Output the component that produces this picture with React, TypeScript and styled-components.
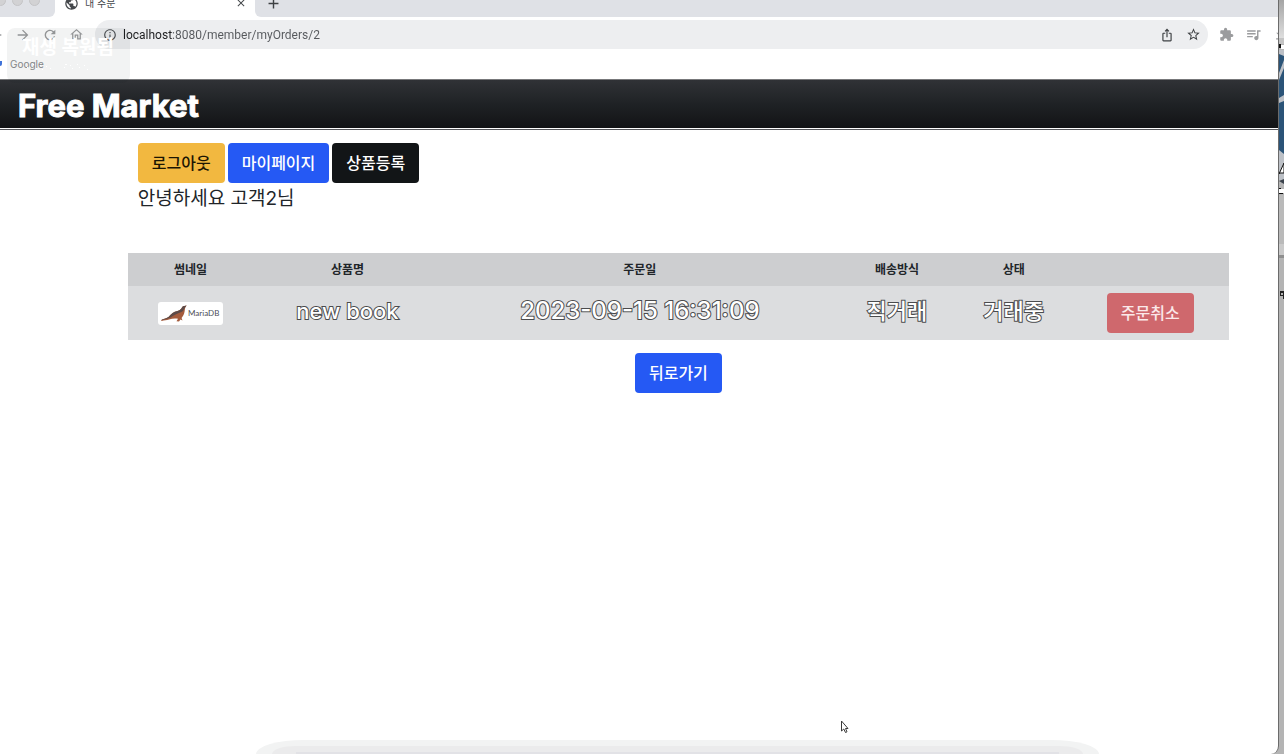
import React from "react";
import styled, { createGlobalStyle } from "styled-components";
import {
  MdAdd,
  MdArrowBack,
  MdArrowForward,
  MdClose,
  MdExtension,
  MdFileDownload,
  MdInfoOutline,
  MdIosShare,
  MdOutlineHome,
  MdPublic,
  MdQueueMusic,
  MdRefresh,
  MdStarBorder,
} from "react-icons/md";

const GlobalStyle = createGlobalStyle`
  * { box-sizing: border-box; }
  body {
    margin: 0;
    overflow: hidden;
    background: #fff;
    font-family: Inter, "Noto Sans CJK KR", sans-serif;
    color: #212529;
  }
  button, input { font: inherit; }
`;

const Screen = styled.div`
  display: flex;
  min-height: 100vh;
  background: #b4b4b4;
`;

const BrowserWindow = styled.div`
  position: relative;
  flex: 1;
  min-width: 0;
  overflow: hidden;
  background: #fff;
  border-right: 1px solid #6b6b6b;
  border-bottom-right-radius: 8px;
`;

/* Browser chrome */
const TabStrip = styled.div`
  display: flex;
  height: 28px;
  margin-top: -11px;
  background: #fff;
`;

const WindowControls = styled.div`
  display: flex;
  align-items: center;
  gap: 6px;
  width: 55px;
  padding-bottom: 6px;
  background: #dfe1e6;
  border-bottom-right-radius: 6px;
`;

const ControlDot = styled.span`
  width: 11px;
  height: 11px;
  border: 1px solid #c4c4c6;
  border-radius: 50%;
  background: #d2d2d4;
  &:first-child { margin-left: -5px; }
`;

const Tab = styled.div`
  display: flex;
  align-items: center;
  gap: 6px;
  width: 200px;
  padding: 0 8px 0 9px;
  font-size: 10px;
  color: #45484c;
`;

const TabTitle = styled.span`
  flex: 1;
  line-height: 28px;
`;

const TabRest = styled.div`
  display: flex;
  flex: 1;
  align-items: center;
  padding-left: 9px;
  background: #dfe1e6;
  border-bottom-left-radius: 6px;
`;

const IconButton = styled.button<{ $width?: number; $tone?: string }>`
  display: flex;
  flex: none;
  align-items: center;
  justify-content: center;
  width: ${(p) => p.$width ?? 27}px;
  height: 27px;
  padding: 0;
  border: 0;
  background: none;
  color: ${(p) => p.$tone ?? "#9b9c9e"};
`;

const Toolbar = styled.div`
  display: flex;
  align-items: center;
  padding: 3px 0;
`;

const NavButtons = styled.div`
  display: flex;
  margin: 0 5px 0 -18px;
`;

const ExtensionButtons = styled.div`
  display: flex;
  margin: 0 -16px 0 5px;
`;

const AddressBar = styled.label`
  display: flex;
  flex: 1;
  align-items: center;
  height: 29px;
  padding: 0 1px 0 8px;
  border-radius: 15px;
  background: #edeef0;
  color: #4d5054;
`;

const AddressInput = styled.input`
  flex: 1;
  min-width: 0;
  margin-left: 6px;
  padding: 0;
  border: 0;
  outline: 0;
  font-family: Roboto, sans-serif;
  font-size: 12px;
  line-height: 20px;
  color: #4d5054;
  background: linear-gradient(to right, #1c1d1f 49px, #55585c 49px);
  background-clip: text;
  -webkit-text-fill-color: transparent;
`;

const BookmarkBar = styled.nav`
  display: flex;
  align-items: center;
  gap: 8px;
  height: 27px;
  padding-bottom: 4px;
`;

const BookmarkIcon = styled.span`
  width: 2px;
  height: 5px;
  border-radius: 0 0 4px 0;
  background: #3f72d8;
`;

const Bookmark = styled.a`
  font-size: 10px;
  line-height: 16px;
  color: #8b8c8e;
  text-decoration: none;
`;

const Notice = styled.div`
  position: absolute;
  top: 28px;
  left: 7px;
  width: 123px;
  height: 55px;
  padding: 7px 0 0 15px;
  border-radius: 8px;
  background: rgba(0, 24, 16, 0.05);
  color: #fff;
  font-size: 19px;
  font-weight: 700;
  line-height: 26px;
  white-space: nowrap;
  svg { display: block; }
`;

/* Page */
const SiteHeader = styled.header`
  height: 49px;
  padding-left: 18px;
  border-top: 1px solid #77787a;
  background: linear-gradient(#303236, #1f2225 50%, #121315);
`;

const SiteTitle = styled.h1`
  margin: 0;
  font-size: 31px;
  font-weight: 700;
  line-height: 52px;
  color: #fff;
  -webkit-text-stroke: 1px #fff;
`;

const HeaderRule = styled.div`
  height: 2px;
  border-bottom: 1px solid #55565a;
`;

const Content = styled.main`
  padding: 13px 49px 0 10%;
`;

const AccountActions = styled.div`
  display: flex;
  gap: 3px;
  padding-left: 10px;
`;

const tones = {
  warning: ["#f2b840", "#1c1503"],
  primary: ["#2559f4", "#fff"],
  dark: ["#121517", "#fff"],
  danger: ["#cf686d", "#fbe9ea"],
};

const Button = styled.button<{ $tone: keyof typeof tones }>`
  height: 40px;
  padding: 0 14px;
  border: 0;
  border-radius: 4px;
  background: ${(p) => tones[p.$tone][0]};
  color: ${(p) => tones[p.$tone][1]};
  font-size: 16px;
  font-weight: 500;
  line-height: 24px;
  white-space: nowrap;
`;

const Greeting = styled.p`
  margin: 0;
  padding: 1px 0 39px 10px;
  font-size: 19px;
  line-height: 30px;
`;

const OrderTable = styled.table`
  width: 100%;
  table-layout: fixed;
  border-collapse: collapse;
  text-align: center;
  background: #dcdddf;
`;

const HeadCell = styled.th<{ $share: number }>`
  width: ${(p) => p.$share}%;
  height: 33px;
  padding: 0;
  background: #cdced0;
  font-size: 12px;
  font-weight: 700;
  line-height: 20px;
`;

const Cell = styled.td<{ $outlined?: boolean; $size?: number }>`
  height: 54px;
  padding: 0;
  font-size: ${(p) => p.$size ?? 24}px;
  line-height: 32px;
  white-space: nowrap;
  ${(p) =>
    p.$outlined &&
    `
    padding-bottom: 4px;
    color: #fff;
    font-weight: 500;
    -webkit-text-stroke: 2px #4a4b4d;
    paint-order: stroke fill;
  `}
`;

const Thumbnail = styled.span`
  display: flex;
  align-items: center;
  gap: 1px;
  width: 65px;
  height: 23px;
  margin: 0 auto;
  padding: 0 3px;
  border-radius: 3px;
  background: #fff;
  font-family: Lato, sans-serif;
  font-size: 8px;
  line-height: 10px;
  color: #4b4d57;
`;

const BackRow = styled.div`
  display: flex;
  justify-content: center;
  padding-top: 13px;
`;

/* Things floating over the window */
const DockShade = styled.div`
  position: absolute;
  right: 14%;
  bottom: 0;
  left: 20%;
  height: 14px;
  padding: 6px 16px 0;
  border-radius: 48px 48px 0 0 / 14px 14px 0 0;
  background: #f2f3f3;
`;

const DockInner = styled.div`
  height: 8px;
  padding: 6px 24px 0;
  border-radius: 24px 24px 0 0 / 8px 8px 0 0;
  background: #ebebec;
`;

const DockCore = styled.div`
  height: 2px;
  background: #e2e2e6;
`;

const Pointer = styled.svg`
  position: absolute;
  bottom: 20px;
  left: 840px;
`;

const Backdrop = styled.aside`
  width: 5px;
  overflow: hidden;
`;

const columns: [string, number][] = [
  ["썸네일", 11.4],
  ["상품명", 17.1],
  ["주문일", 36],
  ["배송방식", 10.7],
  ["상태", 10.5],
  ["", 14.3],
];

function SeaLion() {
  return (
    <svg width="26" height="17" viewBox="0 0 26 17" aria-hidden="true">
      <path
        d="M0 15.200C2 13.600 5 14 7.500 12C10.500 8.500 12.500 7 16.500 6C20.500 5 20.600 2.200 22 1.200L25.600 0.400L24.600 1.900C23.600 3.500 24 6 23.100 8.500C22.500 10.500 21 12 20.600 13L21.500 15.500L19.500 14.500L18 16.500L15.500 16.300L17 13.800C14 13 11 13.600 8 14.400C5.500 15.300 3 15 0.800 16Z"
        fill="#a55c3d"
      />
      <path
        d="M0 15.200C2 13.600 5 14 7.500 12C10.500 8.500 12.500 7 16.500 6C20.500 5 20.600 2.200 22 1.200L25.600 0.400C23 2.500 23.400 5 21 6.700C17 8.200 13 9.700 9.500 12.500C6 14.500 3 14.200 0 15.200Z"
        fill="#5c4b49"
      />
    </svg>
  );
}

export default function App() {
  return (
    <>
      <GlobalStyle />
      <Screen>
        <BrowserWindow>
          <TabStrip>
            <WindowControls>
              <ControlDot />
              <ControlDot />
              <ControlDot />
            </WindowControls>
            <Tab>
              <MdPublic size={15} />
              <TabTitle>내 주문</TabTitle>
              <IconButton $width={12} $tone="#45484c" aria-label="Close tab">
                <MdClose size={12} />
              </IconButton>
            </Tab>
            <TabRest>
              <IconButton $width={18} $tone="#3d4043" aria-label="New tab">
                <MdAdd size={17} />
              </IconButton>
            </TabRest>
          </TabStrip>

          <Toolbar>
            <NavButtons>
              <IconButton aria-label="Back"><MdArrowBack size={16} /></IconButton>
              <IconButton aria-label="Forward"><MdArrowForward size={16} /></IconButton>
              <IconButton aria-label="Reload"><MdRefresh size={16} /></IconButton>
              <IconButton aria-label="Home"><MdOutlineHome size={15} /></IconButton>
            </NavButtons>
            <AddressBar>
              <MdInfoOutline size={14} />
              <AddressInput aria-label="Address" defaultValue="localhost:8080/member/myOrders/2" />
              <IconButton $tone="#3d4043" aria-label="Share"><MdIosShare size={14} /></IconButton>
              <IconButton $tone="#3d4043" aria-label="Bookmark"><MdStarBorder size={15} /></IconButton>
            </AddressBar>
            <ExtensionButtons>
              <IconButton aria-label="Extensions"><MdExtension size={15} /></IconButton>
              <IconButton aria-label="Media"><MdQueueMusic size={17} /></IconButton>
              <IconButton aria-label="Downloads"><MdFileDownload size={15} /></IconButton>
            </ExtensionButtons>
          </Toolbar>
          <BookmarkBar>
            <BookmarkIcon />
            <Bookmark href="#google">Google</Bookmark>
          </BookmarkBar>

          <SiteHeader>
            <SiteTitle>Free Market</SiteTitle>
          </SiteHeader>
          <HeaderRule />

          <Content>
            <AccountActions>
              <Button $tone="warning">로그아웃</Button>
              <Button $tone="primary">마이페이지</Button>
              <Button $tone="dark">상품등록</Button>
            </AccountActions>
            <Greeting>안녕하세요 고객2님</Greeting>
            <OrderTable>
              <thead>
                <tr>
                  {columns.map(([label, share], i) => (
                    <HeadCell key={i} $share={share}>{label}</HeadCell>
                  ))}
                </tr>
              </thead>
              <tbody>
                <tr>
                  <Cell>
                    <Thumbnail>
                      <SeaLion />
                      MariaDB
                    </Thumbnail>
                  </Cell>
                  <Cell $outlined $size={22}>new book</Cell>
                  <Cell $outlined>2023-09-15 16:31:09</Cell>
                  <Cell $outlined $size={22}>직거래</Cell>
                  <Cell $outlined $size={22}>거래중</Cell>
                  <Cell>
                    <Button $tone="danger">주문취소</Button>
                  </Cell>
                </tr>
              </tbody>
            </OrderTable>
            <BackRow>
              <Button $tone="primary">뒤로가기</Button>
            </BackRow>
          </Content>

          <Notice>
            재생 복원됨
            <svg width="70" height="12" fill="#fff" aria-hidden="true">
              <path d="M5 6h1v1h-1zM11 3h1v1h-1zM14 7h1v1h-1zM18 4h1v1h-1zM20 8h1v1h-1zM24 5h1v1h-1zM28 7h1v1h-1zM43 3h2v1h-2zM42 6h1v1h-1zM48 4h1v1h-1zM50 7h1v1h-1zM55 3h1v1h-1zM57 6h1v1h-1zM62 4h1v1h-1zM65 8h1v1h-1z" />
            </svg>
          </Notice>
          <DockShade>
            <DockInner>
              <DockCore />
            </DockInner>
          </DockShade>
          <Pointer width="10" height="14" viewBox="0 0 10 14" aria-hidden="true">
            <path d="M1.500 1V11L3.800 9L5.500 12.500L7 11.800L5.500 8.500H8Z" fill="#fff" stroke="#3a3a3a" />
          </Pointer>
        </BrowserWindow>

        <Backdrop>
          <svg width="5" height="330" viewBox="0 0 5 330" aria-hidden="true">
            <defs>
              <linearGradient id="panel" x1="0" y1="0" x2="0" y2="1">
                <stop offset="0" stopColor="#a5a5a5" />
                <stop offset="1" stopColor="#dedede" />
              </linearGradient>
            </defs>
            <rect width="5" height="38" fill="url(#panel)" />
            <rect y="38" width="5" height="6" fill="#c4c4c4" />
            <path d="M0 44h2v4h-2z" fill="#111" />
            <path d="M2 45h3v4h-3z" fill="#fff" />
            <rect y="50" width="5" height="104" fill="#2b5478" />
            <path d="M0 50H5V56L0 54zM0 73L5 60V68L0 80zM0 98L5 95V101L0 103zM0 150L5 154V180H0z" fill="#bcc0c6" />
            <path d="M0 174L5 163V173H0z" fill="#fff" stroke="#111" />
            <path d="M0 181L5 179V184z" fill="#3b434c" />
            <path d="M0 189h5v4h-5z" fill="#fff" />
            <path d="M0 188h2v1h-2zM0 193h4v1h-4z" fill="#111" />
            <rect y="195" width="5" height="49" fill="#bababa" />
            <rect y="244" width="5" height="11" fill="#cacaca" />
            <rect y="255" width="5" height="3" fill="#8f8f8f" />
            <path d="M1 291h4v8h-1v-3h-3zM2 293v2h2v-2z" fill="#222" fillRule="evenodd" />
          </svg>
        </Backdrop>
      </Screen>
    </>
  );
}
